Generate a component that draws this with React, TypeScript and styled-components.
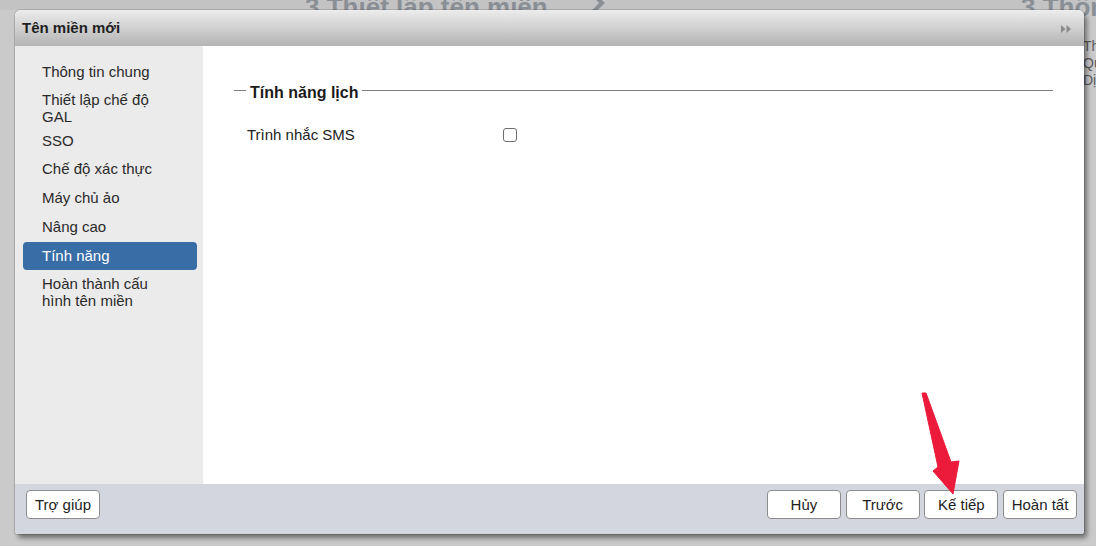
import styled, { createGlobalStyle } from "styled-components"

const GlobalStyle = createGlobalStyle`
  html, body {
    margin: 0;
    padding: 0;
  }
  body {
    width: 1096px;
    height: 546px;
    overflow: hidden;
    background: #cacaca;
    font-family: "Liberation Sans", Arial, Helvetica, sans-serif;
  }
  * {
    box-sizing: border-box;
  }
`

const Screen = styled.div`
  position: relative;
  width: 1096px;
  height: 546px;
  overflow: hidden;
  background: #cacaca;
`

/* the wizard page that sits behind the modal */
const StepBar = styled.div`
  display: grid;
  grid-template-columns: 285px 431px auto;
  align-items: start;
  height: 10px;
  padding-left: 305px;
  background: #c3c3c3;
`

const StepTitle = styled.div`
  margin-top: -6px;
  font-size: 26px;
  line-height: 26px;
  font-weight: bold;
  color: #8a8e95;
  white-space: nowrap;
`

const StepChevron = styled.svg`
  margin-top: -8px;
  color: #8a8e95;
`

const SideNotes = styled.div`
  margin-top: 28px;
  padding-left: 1083px;
  font-size: 14px;
  line-height: 17px;
  color: #5b5b5b;
  white-space: nowrap;
`

/* modal */
const Dialog = styled.section`
  position: absolute;
  left: 15px;
  top: 10px;
  width: 1069px;
  height: 524px;
  display: flex;
  flex-direction: column;
  border-radius: 6px 6px 3px 3px;
  overflow: hidden;
  background: #fff;
  box-shadow: 0 0 0 1px rgba(0, 0, 0, 0.12), 3px 4px 5px rgba(0, 0, 0, 0.45);
`

const TitleBar = styled.header`
  height: 36px;
  flex: none;
  display: flex;
  align-items: center;
  justify-content: space-between;
  padding: 0 12px 2px 7px;
  background: linear-gradient(#ececec, #b4b4b4);
`

const Title = styled.h1`
  margin: 0;
  font-size: 15px;
  font-weight: bold;
  color: #1f1f1f;
`

const CollapseIcon = styled.svg`
  margin-top: 4px;
`

const Body = styled.div`
  flex: 1;
  display: grid;
  grid-template-columns: 188px 1fr;
  min-height: 0;
`

const Sidebar = styled.nav`
  background: #ebebeb;
  padding: 12px 6px 0 8px;
`

const NavItem = styled.div<{ $active?: boolean; $wrap?: boolean }>`
  margin-bottom: ${(p) => (p.$active ? "1.5px" : "0.75px")};
  padding: ${(p) => (p.$wrap ? "4px 30px 1px 19px" : "5px 30px 6px 19px")};
  border-radius: 4px;
  font-size: 15px;
  line-height: 17px;
  color: ${(p) => (p.$active ? "#fff" : "#2a2a2a")};
  background: ${(p) => (p.$active ? "#396da6" : "transparent")};
`

const Content = styled.main`
  background: #fff;
  padding: 38px 31px 0 31px;
`

const SectionHeader = styled.div`
  display: flex;
  align-items: center;
  gap: 4px;
  line-height: 18px;
`

const Rule = styled.span<{ $short?: boolean }>`
  height: 1px;
  margin-bottom: 6px;
  background: #7d7d7d;
  ${(p) => (p.$short ? "width: 12px;" : "flex: 1;")}
`

const Legend = styled.span`
  font-size: 16px;
  font-weight: bold;
  color: #1b1b1b;
`

const OptionRow = styled.label`
  display: grid;
  grid-template-columns: 256px auto;
  align-items: center;
  margin-top: 24px;
  padding-left: 13px;
  font-size: 15px;
  line-height: 17px;
  color: #222;
`

const Checkbox = styled.input`
  appearance: none;
  width: 14px;
  height: 14px;
  margin: 0;
  border: 1px solid #6e6e6e;
  border-radius: 3px;
  background: #fff;
`

const Footer = styled.footer`
  height: 50px;
  flex: none;
  display: flex;
  justify-content: space-between;
  align-items: flex-start;
  padding: 6px 7px 0 11px;
  background: #d3d6de;
`

const ButtonGroup = styled.div`
  display: flex;
  gap: 4.7px;
`

const Button = styled.button`
  width: 74px;
  height: 29px;
  padding: 0;
  border: 1px solid #8c8c8c;
  border-radius: 4px;
  background: #fff;
  font-family: inherit;
  font-size: 15px;
  color: #1e1e1e;
`

const Pointer = styled.svg`
  position: absolute;
  left: 915px;
  top: 388px;
  pointer-events: none;
`

const navItems = [
  { label: "Thông tin chung" },
  { label: "Thiết lập chế độ GAL", wrap: true },
  { label: "SSO" },
  { label: "Chế độ xác thực" },
  { label: "Máy chủ ảo" },
  { label: "Nâng cao" },
  { label: "Tính năng", active: true },
  { label: "Hoàn thành cấu hình tên miền", wrap: true },
]

export default function App() {
  return (
    <Screen>
      <GlobalStyle />

      <StepBar>
        <StepTitle>3 Thiết lập tên miền</StepTitle>
        <StepChevron width="16" height="22" viewBox="0 0 16 22">
          <path d="M3 2 L12 11 L3 20" fill="none" stroke="currentColor" strokeWidth="4" />
        </StepChevron>
        <StepTitle>3 Thông tin</StepTitle>
      </StepBar>
      <SideNotes>
        <div>Thiết lập</div>
        <div>Quản lý</div>
        <div>Dịch vụ</div>
      </SideNotes>

      <Dialog>
        <TitleBar>
          <Title>Tên miền mới</Title>
          <CollapseIcon width="11" height="8" viewBox="0 0 11 8">
            <path d="M0 0 L4.5 4 L0 8 Z M5.5 0 L10 4 L5.5 8 Z" fill="#8a8a8a" />
          </CollapseIcon>
        </TitleBar>

        <Body>
          <Sidebar>
            {navItems.map((item) => (
              <NavItem key={item.label} $active={item.active} $wrap={item.wrap}>
                {item.label}
              </NavItem>
            ))}
          </Sidebar>

          <Content>
            <SectionHeader>
              <Rule $short />
              <Legend>Tính năng lịch</Legend>
              <Rule />
            </SectionHeader>
            <OptionRow>
              <span>Trình nhắc SMS</span>
              <Checkbox type="checkbox" />
            </OptionRow>
          </Content>
        </Body>

        <Footer>
          <Button>Trợ giúp</Button>
          <ButtonGroup>
            <Button>Hủy</Button>
            <Button>Trước</Button>
            <Button>Kế tiếp</Button>
            <Button>Hoàn tất</Button>
          </ButtonGroup>
        </Footer>
      </Dialog>

      <Pointer width="50" height="110" viewBox="0 0 50 110">
        <polygon
          points="7,5 11,5 36,74 44,73 38,106 18,83 23,79"
          fill="#ec1a3b"
          stroke="#ec1a3b"
          strokeWidth="1"
          strokeLinejoin="round"
        />
      </Pointer>
    </Screen>
  )
}
